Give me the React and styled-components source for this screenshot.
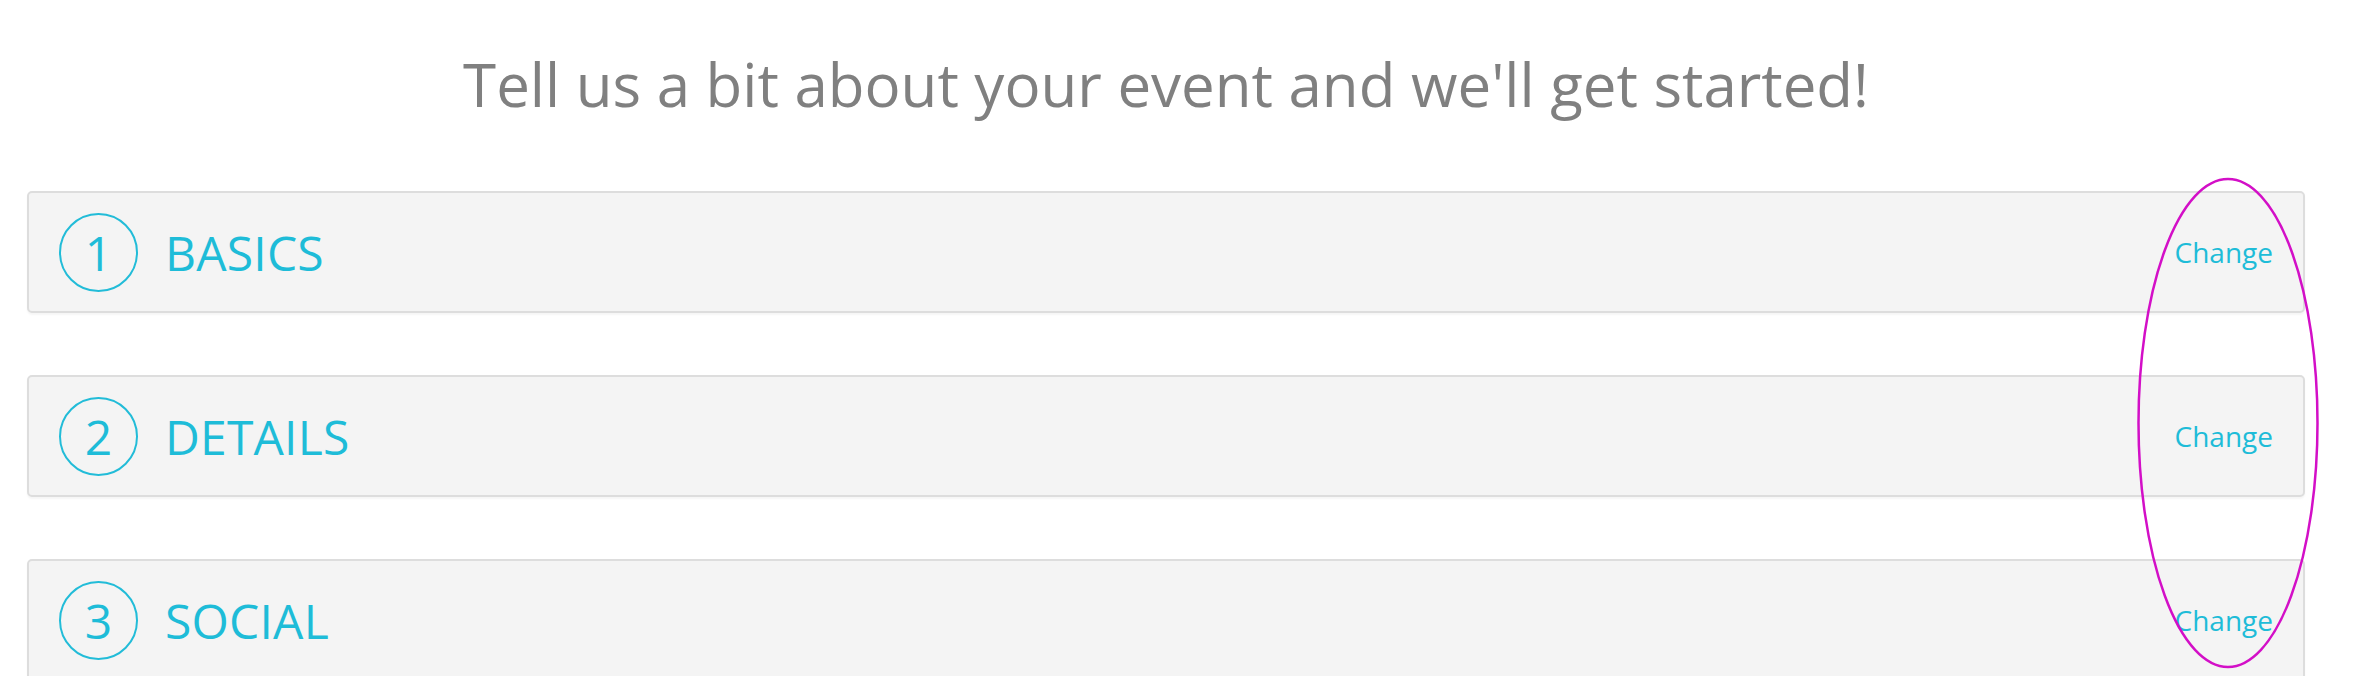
import React from "react";
import styled, { createGlobalStyle } from "styled-components";

const GlobalStyle = createGlobalStyle`
  html, body {
    margin: 0;
    padding: 0;
    background: #fff;
    font-family: "Open Sans", "Liberation Sans", sans-serif;
  }
`;

const Page = styled.main`
  position: relative;
  width: 2278px;
  padding: 43px 0 0 27px;
`;

const Heading = styled.h1`
  margin: 0 0 65px;
  font-size: 60px;
  line-height: 83px;
  font-weight: 400;
  color: #808080;
  text-align: center;
`;

const StepList = styled.ol`
  list-style: none;
  margin: 0;
  padding: 0;
  display: flex;
  flex-direction: column;
  gap: 62px;
`;

const StepCard = styled.li`
  box-sizing: border-box;
  height: 122px;
  display: flex;
  align-items: center;
  gap: 27px;
  padding: 0 30px 0 30px;
  background: #f4f4f4;
  border: 2px solid #dddddd;
  border-radius: 5px;
  box-shadow: 0 2px 2px rgba(0, 0, 0, 0.04);
`;

const Badge = styled.span`
  box-sizing: border-box;
  flex: none;
  width: 79px;
  height: 79px;
  border: 2px solid #22bcd8;
  border-radius: 50%;
  display: flex;
  align-items: center;
  justify-content: center;
  font-size: 48px;
  color: #1ebcd8;
`;

const StepName = styled.h2`
  flex: 1;
  margin: 0;
  font-size: 48px;
  font-weight: 400;
  color: #1ebcd8;
  letter-spacing: 0.2px;
`;

const ChangeLink = styled.a`
  font-size: 28px;
  color: #1ebcd8;
  text-decoration: none;
  cursor: pointer;
`;

// annotation drawn over the "Change" column
const Marker = styled.svg`
  position: absolute;
  left: 2134px;
  top: 175px;
  overflow: visible;
  pointer-events: none;
`;

const steps = ["BASICS", "DETAILS", "SOCIAL"];

const App = () => {
    return (
        <>
            <GlobalStyle />
            <Page>
                <Heading>Tell us a bit about your event and we'll get started!</Heading>
                <StepList>
                    {
                        steps.map((name, idx) => (
                            <StepCard key={name}>
                                <Badge>{idx + 1}</Badge>
                                <StepName>{name}</StepName>
                                <ChangeLink>Change</ChangeLink>
                            </StepCard>
                        ))
                    }
                </StepList>
                <Marker width="188" height="496" viewBox="0 0 188 496">
                    <ellipse cx="94" cy="248" rx="89.5" ry="244" fill="none" stroke="#d30fc7" strokeWidth="2.5" />
                </Marker>
            </Page>
        </>
    );
};

export default App;
